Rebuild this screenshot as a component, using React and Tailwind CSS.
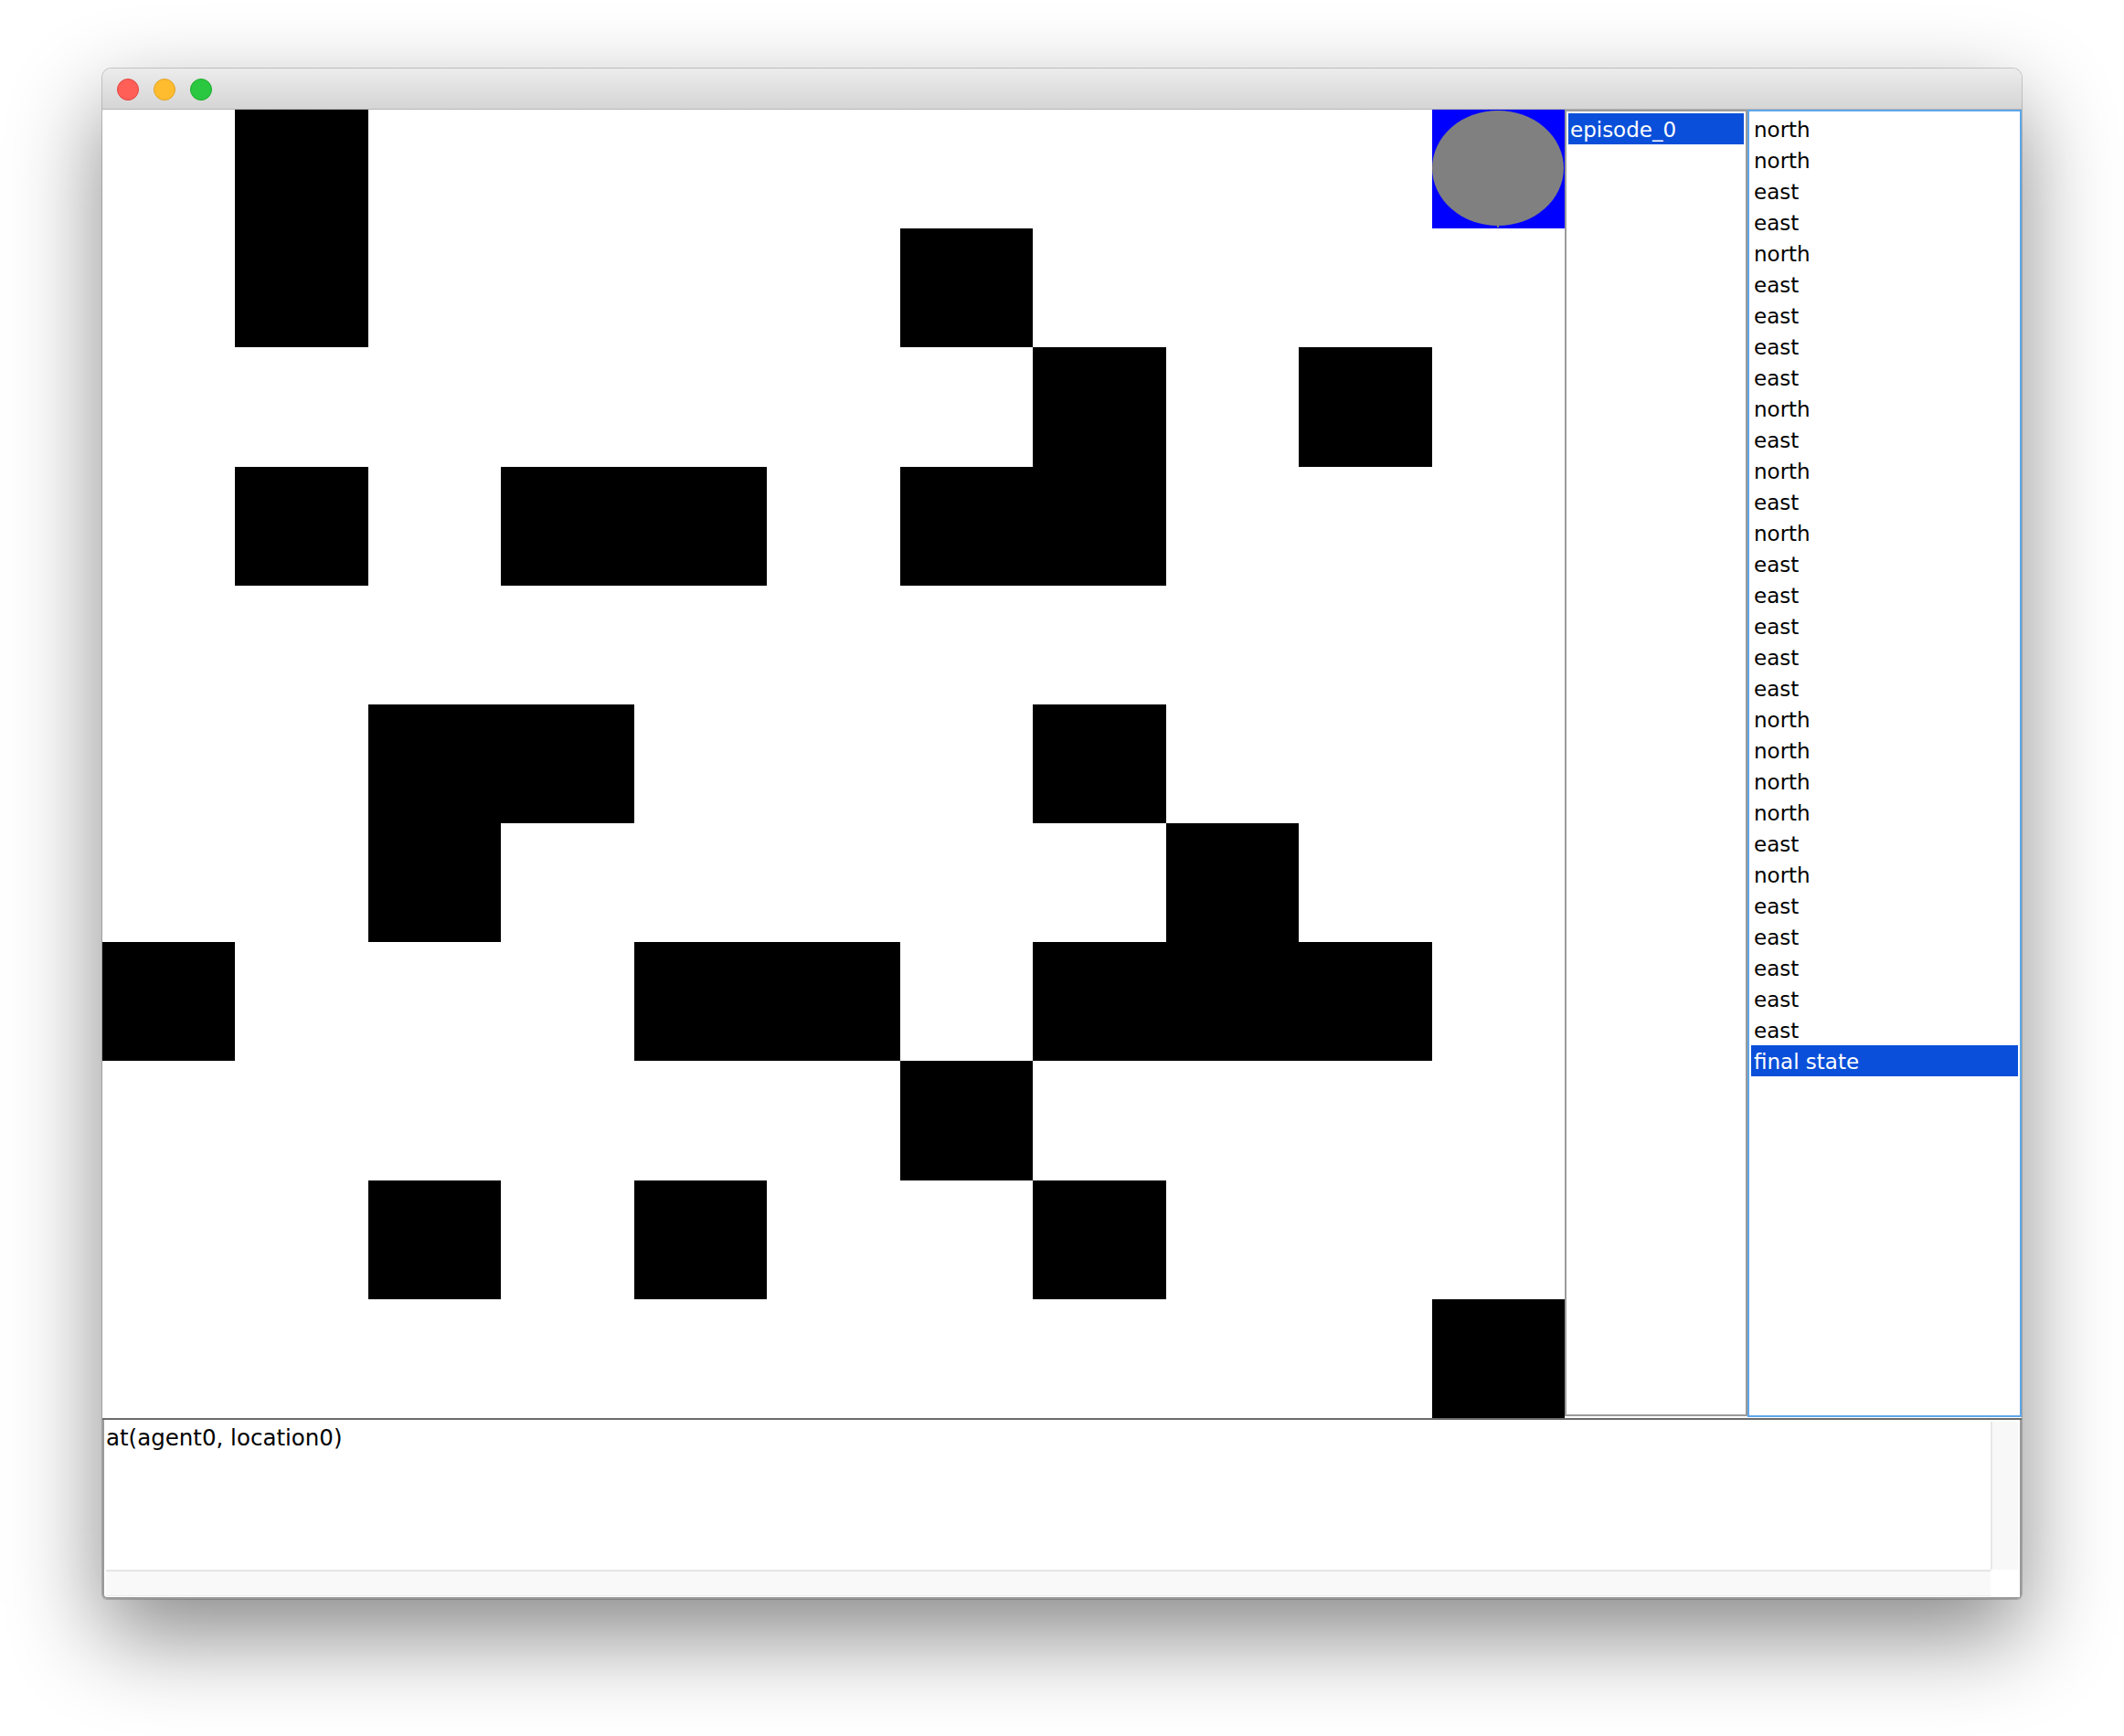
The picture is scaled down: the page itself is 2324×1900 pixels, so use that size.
import React from "react";

const MAP = [
  ".#........A",
  ".#....#....",
  ".......#.#.",
  ".#.##.##...",
  "...........",
  "..##...#...",
  "..#.....#..",
  "#...##.###.",
  "......#....",
  "..#.#..#...",
  "..........#",
];

const ACTIONS = [
  "north", "north", "east", "east", "north", "east", "east", "east", "east",
  "north", "east", "north", "east", "north", "east", "east", "east", "east",
  "east", "north", "north", "north", "north", "east", "north", "east", "east",
  "east", "east", "east",
];

function Cell({ kind }) {
  if (kind === "A") {
    return (
      <div className="bg-[#0000ff] flex flex-col items-center justify-center">
        <div className="w-[144px] h-[126px] rounded-[50%] bg-[#808080]" />
        <div className="w-[2px] h-[2px] bg-[#808080]" />
      </div>
    );
  }
  return <div className={kind === "#" ? "bg-black" : "bg-white"} />;
}

export default function App() {
  return (
    <div className="w-[2324px] h-[1900px] bg-white pt-[75px] pl-[112px] overflow-hidden font-['DejaVu_Sans',sans-serif]">
      <div className="w-[2100px] flex flex-col rounded-t-[10px] rounded-b-[5px] bg-white shadow-[0_0_0_1px_rgba(0,0,0,0.18),0_40px_100px_rgba(0,0,0,0.47)]">
        {/* Title bar */}
        <div className="h-[45px] rounded-t-[10px] bg-gradient-to-b from-[#ececec] to-[#d5d5d5] border-b-[1.5px] border-[#b4b4b4] flex items-center pl-[16px] pt-[2px] gap-[16px]">
          <div className="w-[24px] h-[24px] rounded-full bg-[#ff5f57] border border-[#e2463f]" />
          <div className="w-[24px] h-[24px] rounded-full bg-[#febc2e] border border-[#e1a325]" />
          <div className="w-[24px] h-[24px] rounded-full bg-[#2ac840] border border-[#1dad2b]" />
        </div>

        {/* Main content */}
        <div className="flex h-[1432px]">
          <div className="w-[1600px] h-[1432px] grid grid-cols-11 grid-rows-11">
            {MAP.map((row, r) =>
              row.split("").map((ch, c) => <Cell key={r + "-" + c} kind={ch} />)
            )}
          </div>

          {/* Episode list */}
          <div className="w-[200px] h-[1430px] border-2 border-[#9b9b9b] bg-white p-[2px]">
            <div className="h-[34px] pt-[3px] leading-[31px] bg-[#0a4fd9] text-white text-[23px] pl-[2px] whitespace-nowrap">
              episode_0
            </div>
          </div>

          {/* Actions list */}
          <div className="w-[300px] h-[1431px] border-2 border-[#5ea7e8] bg-white p-[2px]">
            {ACTIONS.map((a, i) => (
              <div key={i} className="h-[34px] pt-[3px] leading-[31px] text-black text-[23px] pl-[3px] whitespace-nowrap">
                {a}
              </div>
            ))}
            <div className="h-[34px] pt-[3px] leading-[31px] bg-[#0a4fd9] text-white text-[23px] pl-[3px] whitespace-nowrap">
              final state
            </div>
          </div>
        </div>

        {/* Divider */}
        <div className="h-[2px] bg-[#6b6b6b]" />

        {/* Bottom text area */}
        <div className="h-[196px] flex flex-col border-l-2 border-r-2 border-b-2 border-[#9a9a9a] rounded-b-[5px] bg-white">
          <div className="h-[164px] flex pr-[2px]">
            <div className="flex-1 pt-[3px] pl-[2px] text-[24.5px] leading-[34px] text-black whitespace-nowrap">
              at(agent0, location0)
            </div>
            <div className="w-[30px] pt-[2px]">
              <div className="h-full border-l-2 border-[#e8e8e8] bg-[#f8f8f8]" />
            </div>
          </div>
          <div className="h-[30px] flex">
            <div className="w-[2px]" />
            <div className="w-[2062px] h-[29px] border-t-2 border-b-[1.5px] border-t-[#e5e5e5] border-b-[#ececec] bg-[#f9f9f9]" />
            <div className="flex-1 bg-white" />
          </div>
        </div>
      </div>
    </div>
  );
}
